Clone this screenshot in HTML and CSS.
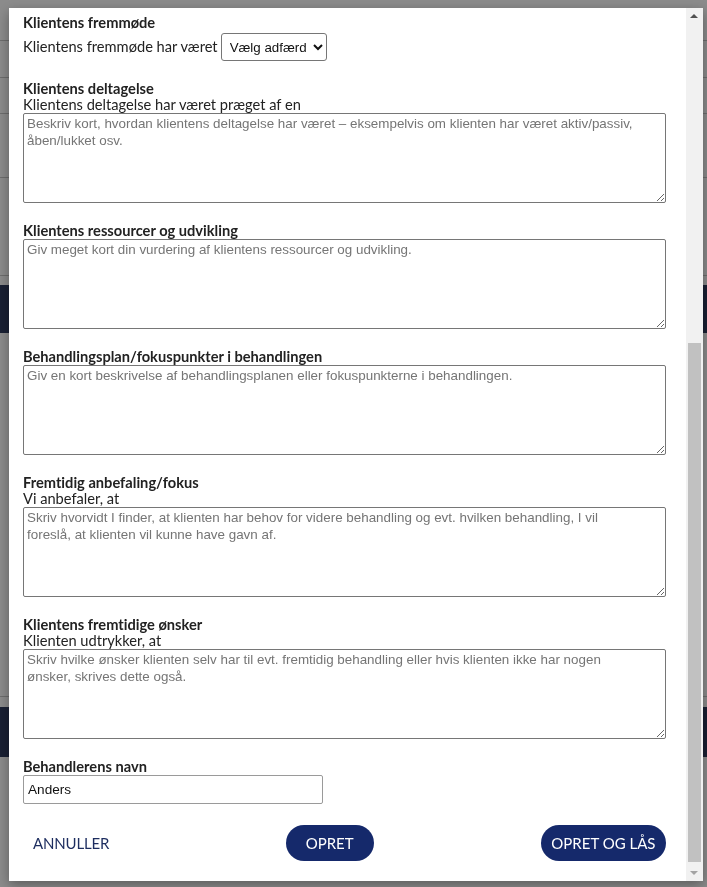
FILE: index.html
```html
<!DOCTYPE html>
<html lang="da">
<head>
<meta charset="utf-8">
<title>Statusrapport</title>
<link rel="stylesheet" href="styles.css">
</head>
<body>
<div class="page">
  <div class="page-row r1"></div>
  <div class="page-row r2"></div>
  <div class="page-row r3"></div>
  <div class="page-row r4"></div>
  <div class="page-row r5"></div>
  <div class="page-band b1"></div>
  <div class="page-row r6"></div>
  <div class="page-band b2"></div>
</div>
<div class="overlay"></div>

<div class="modal">
  <div class="modal-body">
    <section class="field field-inline">
      <h3 class="field-title">Klientens fremmøde</h3>
      <div class="inline-row">
        <span class="field-label">Klientens fremmøde har været</span>
        <select class="select">
          <option>Vælg adfærd</option>
        </select>
      </div>
    </section>

    <section class="field">
      <h3 class="field-title">Klientens deltagelse</h3>
      <div class="field-label">Klientens deltagelse har været præget af en</div>
      <textarea class="textarea" placeholder="Beskriv kort, hvordan klientens deltagelse har været – eksempelvis om klienten har været aktiv/passiv,&#10;åben/lukket osv."></textarea>
    </section>

    <section class="field">
      <h3 class="field-title">Klientens ressourcer og udvikling</h3>
      <textarea class="textarea" placeholder="Giv meget kort din vurdering af klientens ressourcer og udvikling."></textarea>
    </section>

    <section class="field">
      <h3 class="field-title">Behandlingsplan/fokuspunkter i behandlingen</h3>
      <textarea class="textarea" placeholder="Giv en kort beskrivelse af behandlingsplanen eller fokuspunkterne i behandlingen."></textarea>
    </section>

    <section class="field">
      <h3 class="field-title">Fremtidig anbefaling/fokus</h3>
      <div class="field-label">Vi anbefaler, at</div>
      <textarea class="textarea" placeholder="Skriv hvorvidt I finder, at klienten har behov for videre behandling og evt. hvilken behandling, I vil&#10;foreslå, at klienten vil kunne have gavn af."></textarea>
    </section>

    <section class="field">
      <h3 class="field-title">Klientens fremtidige ønsker</h3>
      <div class="field-label">Klienten udtrykker, at</div>
      <textarea class="textarea" placeholder="Skriv hvilke ønsker klienten selv har til evt. fremtidig behandling eller hvis klienten ikke har nogen&#10;ønsker, skrives dette også."></textarea>
    </section>

    <section class="field field-last">
      <h3 class="field-title">Behandlerens navn</h3>
      <input class="input" type="text" value="Anders">
    </section>

    <div class="actions">
      <button class="btn btn-text" type="button">ANNULLER</button>
      <button class="btn btn-primary" type="button">OPRET</button>
      <button class="btn btn-primary" type="button">OPRET OG LÅS</button>
    </div>
  </div>

  <div class="scrollbar">
    <div class="sb-arrow sb-up"></div>
    <div class="sb-space"></div>
    <div class="sb-thumb"></div>
    <div class="sb-arrow sb-down"></div>
  </div>
</div>
</body>
</html>
```

FILE: styles.css
```css
* { box-sizing: border-box; }

html, body {
  margin: 0;
  padding: 0;
  height: 100%;
  overflow: hidden;
}

body {
  background: #ffffff;
  font-family: "Lato", "Open Sans", sans-serif;
  font-variant-ligatures: none;
  color: #222;
}

/* ---------- background page (behind overlay) ---------- */
.page {
  display: flex;
  flex-direction: column;
}
.page-row { border-bottom: 1px solid #c8c8c8; }
.r1 { height: 41px; }
.r2 { height: 37px; }
.r3 { height: 36px; }
.r4 { height: 64px; }
.r5 { height: 98px; margin-bottom: 9px; }
.page-band { background: #2e3a5e; }
.b1 { height: 48px; }
.r6 { height: 364px; }
.b2 { height: 50px; margin-top: 10px; }

.overlay {
  position: fixed;
  inset: 0;
  background: rgba(0, 0, 0, 0.455);
}

/* ---------- modal ---------- */
.modal {
  position: fixed;
  left: 9px;
  top: 8px;
  width: 694px;
  height: 873px;
  background: #fff;
  display: flex;
  box-shadow: 0 4px 12px rgba(0,0,0,0.35);
}

.modal-body {
  flex: 1;
  padding: 7px 20px 20px 14px;
  display: flex;
  flex-direction: column;
}

.field { margin-bottom: 20px; }
.field-inline { margin-bottom: 20px; }
.field-last { margin-bottom: 21px; }

.field-title {
  margin: 0;
  font-size: 14.65px;
  font-weight: 700;
  line-height: 16px;
  color: #222;
}

.field-label {
  font-size: 14.65px;
  line-height: 16px;
  color: #222;
}

.inline-row {
  display: flex;
  align-items: center;
  gap: 3px;
  margin-top: 2px;
}

.select {
  height: 28px;
  font-family: "Liberation Sans", Arial, sans-serif;
  font-size: 13.33px;
  color: #111;
  background: #fff;
  border: 1px solid #767676;
  border-radius: 3px;
  padding: 0 2px 0 4px;
}

.textarea {
  display: block;
  width: 643px;
  height: 90px;
  margin: 0;
  padding: 1px 2px 1px 3px;
  border: 1px solid #767676;
  border-radius: 2px;
  font-family: "Liberation Sans", Arial, sans-serif;
  font-size: 13.4px;
  line-height: 17px;
  color: #111;
  resize: vertical;
}
.textarea::placeholder { color: #757575; }

.input {
  display: block;
  width: 300px;
  height: 29px;
  margin: 0;
  padding: 1px 4px;
  border: 1px solid #9a9a9a;
  border-radius: 2px;
  font-family: "Liberation Sans", Arial, sans-serif;
  font-size: 13.6px;
  color: #111;
}

.actions {
  display: flex;
  justify-content: space-between;
  align-items: center;
  width: 643px;
}

.btn {
  height: 36px;
  min-width: 88px;
  padding: 0 10.5px;
  border: none;
  border-radius: 18px;
  font-family: "Lato", "Open Sans", sans-serif;
  font-size: 15px;
  font-weight: 400;
  cursor: pointer;
}
.btn-text {
  background: transparent;
  color: #1d2d5f;
  padding: 0 9px 0 10px;
  letter-spacing: -0.15px;
}
.btn-primary {
  background: #15296b;
  color: #fff;
}

/* ---------- fake scrollbar ---------- */
.scrollbar {
  width: 17px;
  background: #f1f1f1;
  display: flex;
  flex-direction: column;
  align-items: center;
}
.sb-arrow {
  height: 17px;
  width: 17px;
  position: relative;
}
.sb-up::after,
.sb-down::after {
  content: "";
  position: absolute;
  left: 4px;
  width: 0;
  height: 0;
  border-left: 4px solid transparent;
  border-right: 4px solid transparent;
}
.sb-up::after {
  top: 6px;
  border-bottom: 4px solid #505050;
}
.sb-down::after {
  top: 7px;
  border-top: 4px solid #a3a3a3;
}
.sb-space { flex: 1; }
.sb-thumb {
  width: 13px;
  height: 519px;
  background: #c1c1c1;
  margin-bottom: 2px;
}
```
